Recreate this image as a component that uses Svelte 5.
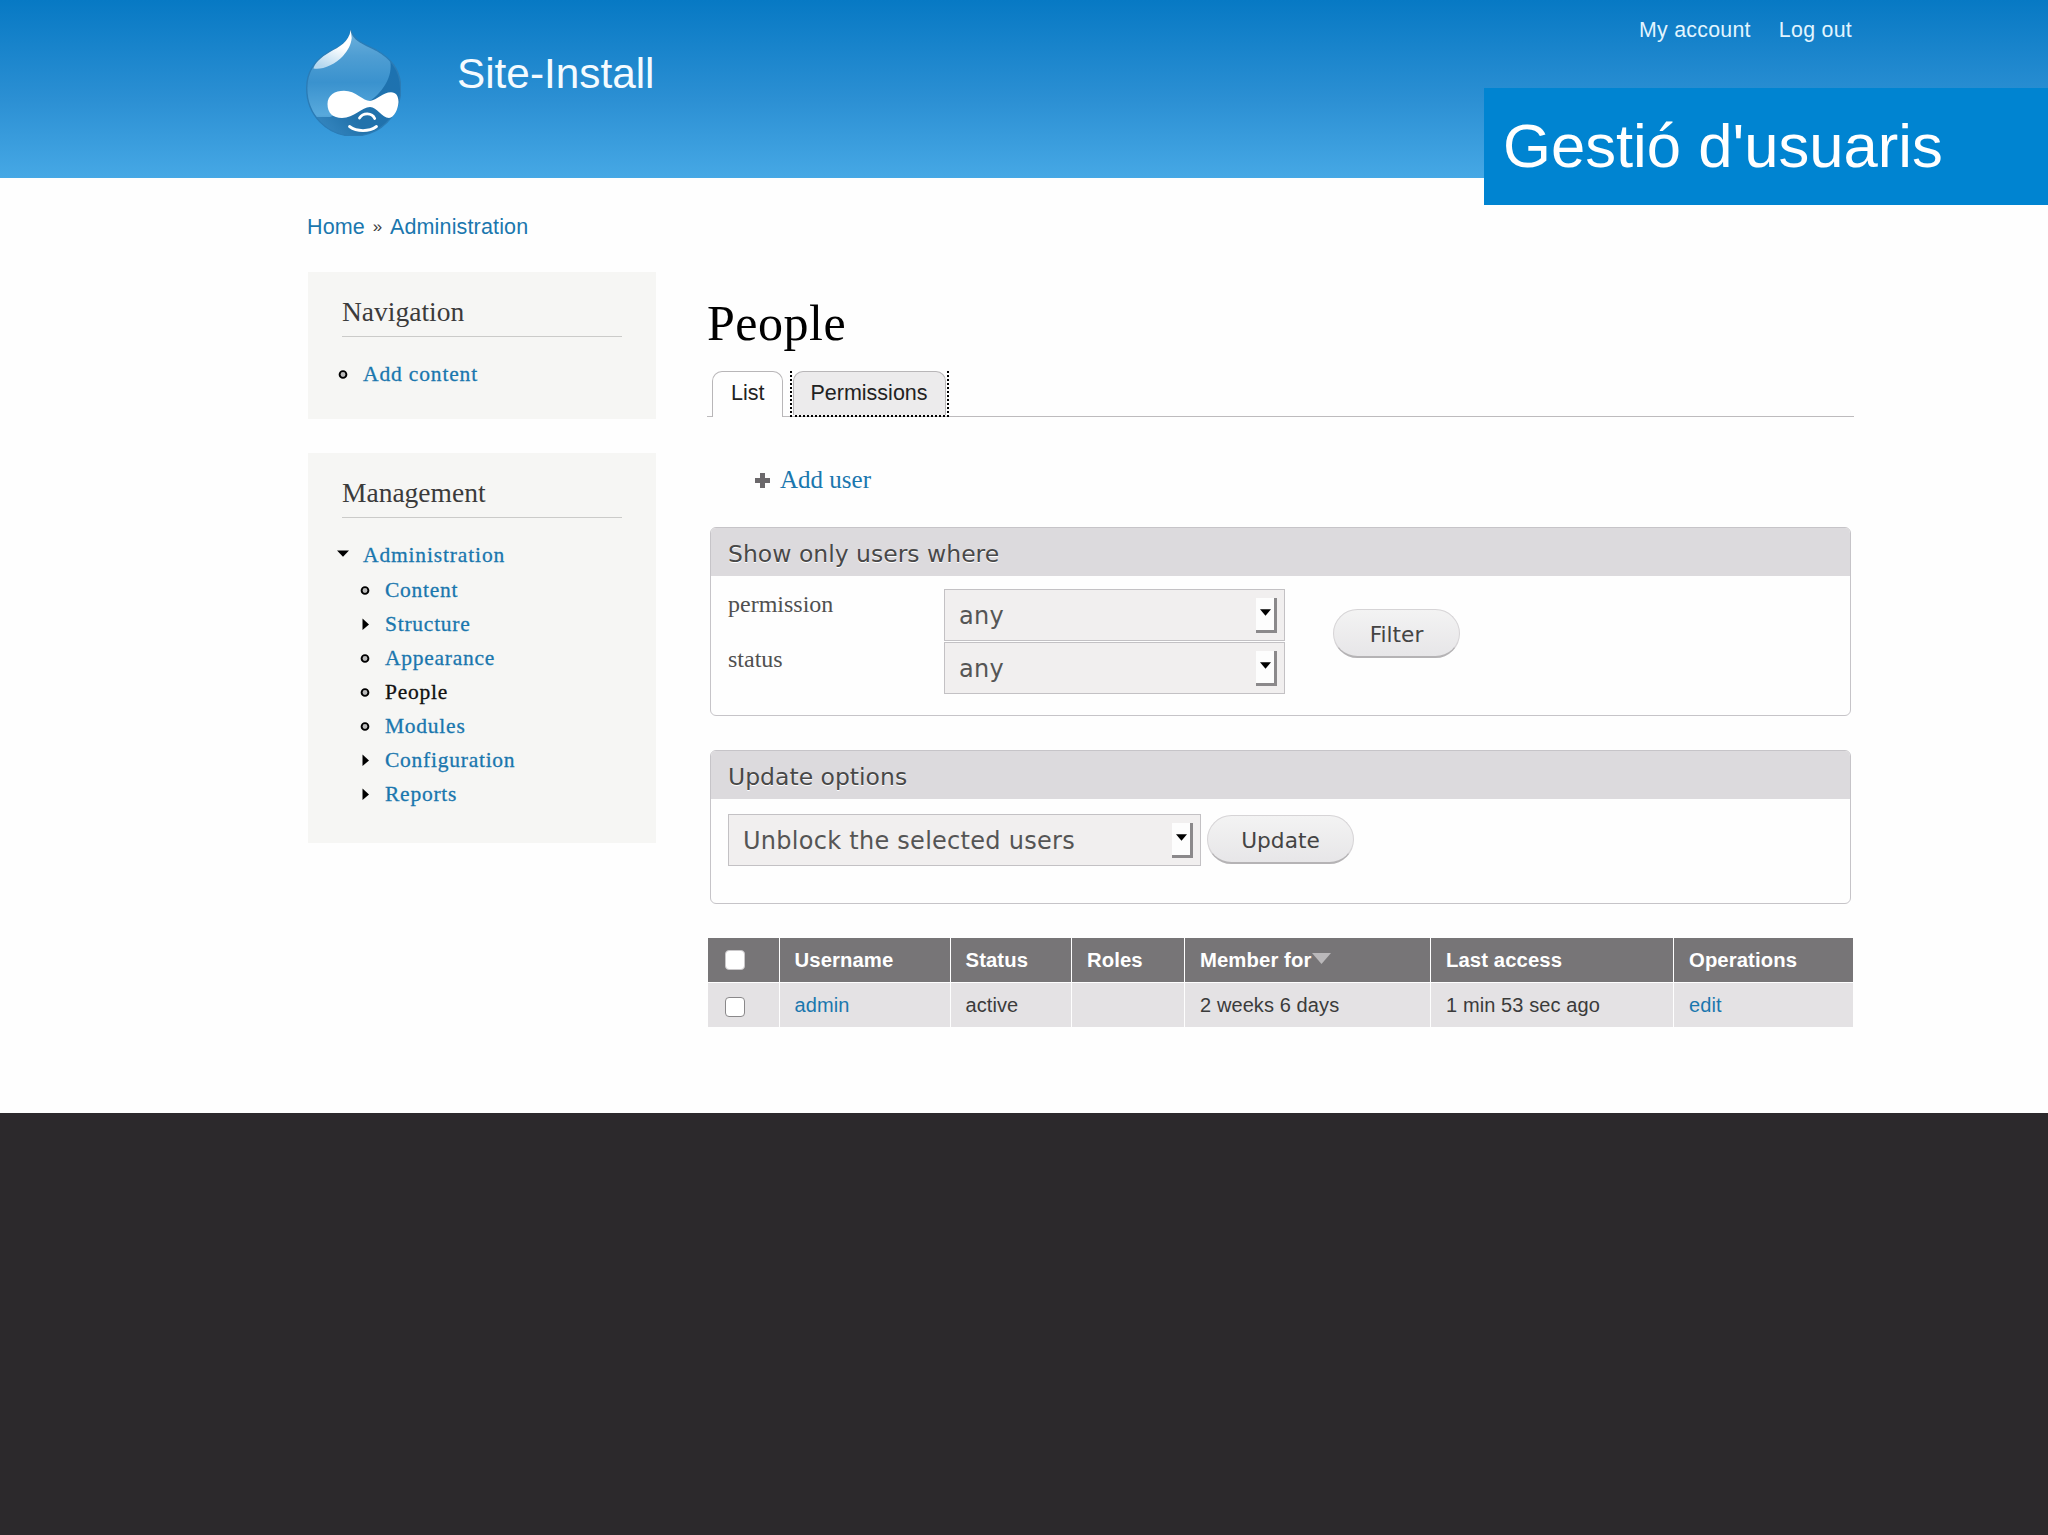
<script lang="ts">
	type Marker = 'leaf' | 'collapsed' | 'expanded';

	interface MenuItem {
		title: string;
		marker: Marker;
		active?: boolean;
		children?: MenuItem[];
	}

	interface Block {
		title: string;
		items: MenuItem[];
	}

	const blocks: Block[] = [
		{
			title: 'Navigation',
			items: [{ title: 'Add content', marker: 'leaf' }]
		},
		{
			title: 'Management',
			items: [
				{
					title: 'Administration',
					marker: 'expanded',
					children: [
						{ title: 'Content', marker: 'leaf' },
						{ title: 'Structure', marker: 'collapsed' },
						{ title: 'Appearance', marker: 'leaf' },
						{ title: 'People', marker: 'leaf', active: true },
						{ title: 'Modules', marker: 'leaf' },
						{ title: 'Configuration', marker: 'collapsed' },
						{ title: 'Reports', marker: 'collapsed' }
					]
				}
			]
		}
	];

	const columns = ['Username', 'Status', 'Roles', 'Member for', 'Last access', 'Operations'];

	const users = [
		{
			name: 'admin',
			status: 'active',
			roles: '',
			memberFor: '2 weeks 6 days',
			lastAccess: '1 min 53 sec ago'
		}
	];

	let sortedBy = $state('Member for');
	let tab = $state('List');
</script>

{#snippet menu(items: MenuItem[])}
	<ul class="menu">
		{#each items as item}
			<li>
				<div class="menu-row">
					<svg class="marker" viewBox="0 0 12 12" width="12" height="12">
						{#if item.marker === 'leaf'}
							<circle cx="6" cy="6.5" r="3.4" fill="#bbb" stroke="#000" stroke-width="1.9" />
						{:else if item.marker === 'collapsed'}
							<path d="M3.5 0.5 L10 6.5 L3.5 12Z" />
						{:else}
							<path d="M0 1.5 H12 L6 7.8Z" />
						{/if}
					</svg>
					<a href="#top" class:active={item.active}>{item.title}</a>
				</div>
				{#if item.children}
					{@render menu(item.children)}
				{/if}
			</li>
		{/each}
	</ul>
{/snippet}

{#snippet dropdown(value: string)}
	<div class="select" role="listbox">
		<span>{value}</span>
		<i class="arrow">
			<svg viewBox="0 0 10 6" width="11" height="7"><path d="M0 0 H10 L5 6Z" /></svg>
		</i>
	</div>
{/snippet}

<div class="page">
	<header>
		<svg class="logo" viewBox="0 0 95 107" width="95" height="107">
			<defs>
				<linearGradient id="drop" x1="0" y1="0" x2="0" y2="1">
					<stop offset="0" stop-color="#6fb2dd" />
					<stop offset="0.25" stop-color="#4f9ed3" />
					<stop offset="0.5" stop-color="#3a92ce" />
					<stop offset="0.8" stop-color="#58a9dc" />
					<stop offset="1" stop-color="#2a7ab5" />
				</linearGradient>
				<linearGradient id="shade" x1="1" y1="0.3" x2="0.1" y2="1">
					<stop offset="0" stop-color="#1d72b0" />
					<stop offset="0.6" stop-color="#2272ab" />
					<stop offset="1" stop-color="#3a8cc6" />
				</linearGradient>
				<linearGradient id="shine" x1="0.8" y1="0" x2="0.4" y2="1">
					<stop offset="0.4" stop-color="#fff" />
					<stop offset="1" stop-color="#b5d8ef" />
				</linearGradient>
				<clipPath id="outline">
					<path
						d="M44.7 1 C44 13 33 18 23 23 C9 31 .7 43 .7 59 C.7 86 21 107 47.5 107 C74 107 94.7 86 94.7 60 C94.7 40 84 29 70 21 C58 15 48 12 44.7 1Z"
					/>
				</clipPath>
			</defs>
			<g clip-path="url(#outline)">
				<rect width="95" height="107" fill="url(#drop)" />
				<path d="M83 27 C89 45 78 62 64 72 L24 88 H0 V107 H95 V30Z" fill="url(#shade)" />
			</g>
			<path
				d="M44.7 1 C44 13 33 18 23 23 C9 31 .7 43 .7 59 C.7 86 21 107 47.5 107 C74 107 94.7 86 94.7 60 C94.7 40 84 29 70 21 C58 15 48 12 44.7 1Z"
				fill="none"
				stroke="#2b7cb6"
				stroke-width="1.4"
			/>
			<path
				d="M44.7 1 C43 13 33 18 24 23 C14 29 9 34 7.5 39.5 C16 41 29 36 37 27 C42 21 45 16 45.7 9Z"
				fill="url(#shine)"
			/>
			<path
				d="M21.5 75 C21.5 66 29 61.7 38 61.7 C50 61.7 57 72 64 72 C71 71 77 63.3 85 63.3 C90 63.3 92.5 67 92.5 73 C92 81 88 88.5 83 89 C76 89 71 78 64 78 C56 78 48 89 36 89 C27 89 21.5 84 21.5 75Z"
				fill="#fff"
			/>
			<path
				d="M53.5 89 C57 83.5 66 83.5 68.7 89.5 M43.5 97.5 C51 103 63 103 70.5 97.5"
				fill="none"
				stroke="#fff"
				stroke-width="2.8"
				stroke-linecap="round"
			/>
		</svg>
		<h2 class="site-name">Site-Install</h2>
		<nav class="account">
			<a href="#top">My account</a>
			<a href="#top">Log out</a>
		</nav>
		<div class="caption">Gestió d'usuaris</div>
	</header>

	<div class="breadcrumb">
		<a href="#top">Home</a><span>»</span><a href="#top">Administration</a>
	</div>

	<div class="columns">
		<aside>
			{#each blocks as block}
				<section class="block">
					<h3>{block.title}</h3>
					{@render menu(block.items)}
				</section>
			{/each}
		</aside>

		<main>
			<h1>People</h1>

			<div class="tabs">
				{#each ['List', 'Permissions'] as name}
					<div class="tab-wrap" class:focused={name === 'Permissions'}>
						<button class="tab" class:selected={tab === name} onclick={() => (tab = name)}>{name}</button>
					</div>
				{/each}
			</div>

			<div class="action">
				<svg viewBox="0 0 15 15" width="15" height="15">
					<path d="M5 0h5v5h5v5h-5v5H5v-5H0V5h5Z" fill="#6b686b" />
				</svg>
				<a href="#top">Add user</a>
			</div>

			<div class="fieldset filters">
				<div class="legend">Show only users where</div>
				<div class="fields">
					<div class="labels">
						<span>permission</span>
						<span>status</span>
					</div>
					<div class="selects">
						{@render dropdown('any')}
						{@render dropdown('any')}
					</div>
					<button class="pill filter">Filter</button>
				</div>
			</div>

			<div class="fieldset update">
				<div class="legend">Update options</div>
				<div class="fields">
					{@render dropdown('Unblock the selected users')}
					<button class="pill">Update</button>
				</div>
			</div>

			<table>
				<colgroup>
					<col class="c-check" />
					<col class="c-name" />
					<col class="c-status" />
					<col class="c-roles" />
					<col class="c-member" />
					<col class="c-access" />
					<col />
				</colgroup>
				<thead>
					<tr>
						<th class="check"><input type="checkbox" aria-label="Select all" /></th>
						{#each columns as column}
							<th>
								{column}{#if column === sortedBy}<svg class="sort" viewBox="0 0 19 11" width="19" height="11"><path d="M0 0H19L9.5 11Z" fill="#bab8ba" /></svg>{/if}
							</th>
						{/each}
					</tr>
				</thead>
				<tbody>
					{#each users as user}
						<tr>
							<td class="check"><input type="checkbox" aria-label={user.name} /></td>
							<td><a href="#top">{user.name}</a></td>
							<td>{user.status}</td>
							<td>{user.roles}</td>
							<td>{user.memberFor}</td>
							<td>{user.lastAccess}</td>
							<td><a href="#top">edit</a></td>
						</tr>
					{/each}
				</tbody>
			</table>
		</main>
	</div>
</div>

<style>
	:global(body) {
		background: #2c292c;
	}

	.page {
		box-sizing: border-box;
		height: 1113px;
		overflow: hidden;
		background: #fefefe;
		color: #3b3b3b;
		font-family: 'Liberation Sans', Arial, sans-serif;
	}

	a {
		color: #1a77ae;
		text-decoration: none;
	}

	h1,
	h2,
	h3 {
		margin: 0;
		font-weight: normal;
	}

	header {
		position: relative;
		display: flex;
		align-items: flex-start;
		box-sizing: border-box;
		height: 178px;
		padding: 0 196px 0 306px;
		background: linear-gradient(#0779c4, #2b8fd3 55%, #46a8e5);
	}

	.logo {
		margin-top: 29px;
	}

	.site-name {
		margin: 49px 0 0 56px;
		color: #f4fbff;
		font-size: 42.3px;
		line-height: 50px;
	}

	.account {
		display: flex;
		gap: 28px;
		margin: 18px 0 0 auto;
		font-size: 21.3px;
		line-height: 24px;
		letter-spacing: 0.3px;
	}

	.account a {
		color: #e2f5ff;
	}

	.caption {
		position: absolute;
		top: 88px;
		right: 0;
		box-sizing: border-box;
		width: 564px;
		height: 117px;
		padding-left: 19px;
		background: #0084d1;
		color: #fff;
		font-size: 61.6px;
		line-height: 116px;
	}

	.breadcrumb {
		display: flex;
		padding: 37px 0 0 307px;
		font-size: 21.5px;
		line-height: 24px;
		letter-spacing: 0.15px;
	}

	.breadcrumb span {
		width: 25px;
		font-size: 17px;
		text-align: center;
	}

	.columns {
		display: flex;
		gap: 51px;
		padding: 33px 194px 0 308px;
	}

	aside {
		flex: none;
		width: 348px;
		font-family: 'Liberation Serif', Georgia, serif;
	}

	.block {
		box-sizing: border-box;
		margin-bottom: 34px;
		padding: 25px 34px 28px;
		background: #f6f6f4;
	}

	.block h3 {
		padding-bottom: 9px;
		border-bottom: 1px solid #cbcbc9;
		font-size: 27.5px;
		line-height: 30px;
	}

	.menu {
		margin: 20px 0 0 -5px;
		padding: 0;
		list-style: none;
	}

	.menu .menu {
		margin: 1px 0 4px 22px;
	}

	.menu-row {
		display: flex;
		align-items: center;
		gap: 14px;
		height: 34px;
		font-size: 21.5px;
		line-height: 34px;
		letter-spacing: 0.85px;
		-webkit-text-stroke: 0.3px;
	}

	.menu .menu .menu-row {
		letter-spacing: 0.75px;
	}

	.menu a.active {
		color: #111;
	}

	main {
		flex: 1;
	}

	h1 {
		margin-top: 21px;
		color: #000;
		font-family: 'Liberation Serif', Georgia, serif;
		font-size: 50px;
		line-height: 60px;
		letter-spacing: 0.5px;
	}

	.tabs {
		display: flex;
		gap: 7px;
		height: 45px;
		margin-top: 18px;
		padding-left: 5px;
		border-bottom: 1px solid #bdbbbd;
	}

	.tab-wrap {
		height: 46px;
	}

	.tab-wrap.focused {
		box-sizing: border-box;
		padding: 0 1px;
		border: 2px dotted #000;
		border-top: 0;
	}

	.tab {
		box-sizing: border-box;
		height: 100%;
		padding: 0 18px 4px;
		border: 1px solid #b8b6b8;
		border-bottom: 0;
		border-radius: 10px 10px 0 0;
		background: #ecebec;
		color: #222;
		font: 21.5px/38px 'Liberation Sans', Arial, sans-serif;
	}

	.focused .tab {
		padding: 0 17px 2px 16px;
	}

	.tab.selected {
		background: #fefefe;
	}

	.action {
		display: flex;
		align-items: center;
		gap: 10px;
		margin: 46px 0 0 48px;
		font-family: 'Liberation Serif', Georgia, serif;
		font-size: 25px;
		line-height: 34px;
	}

	.fieldset {
		box-sizing: border-box;
		margin: 0 3px 0 3px;
		overflow: hidden;
		border: 1.5px solid #c6c4c8;
		border-radius: 6px;
	}

	.filters {
		height: 189px;
		margin-top: 30px;
	}

	.update {
		height: 154px;
		margin-top: 34px;
	}

	.legend {
		height: 48px;
		padding-left: 17px;
		background: #dcdadd;
		color: #484848;
		font-family: 'DejaVu Sans', Verdana, sans-serif;
		font-size: 23.5px;
		line-height: 52px;
		text-shadow: 0 1px 0 #fff;
	}

	.fields {
		display: flex;
		padding-left: 17px;
	}

	.labels {
		display: flex;
		flex-direction: column;
		width: 216px;
		padding-top: 12px;
		color: #505050;
		font: 24px/32px 'Liberation Serif', Georgia, serif;
		gap: 23px;
	}

	.selects {
		display: flex;
		flex-direction: column;
		gap: 1px;
		width: 341px;
		padding-top: 13px;
	}

	.select {
		display: flex;
		align-items: center;
		justify-content: space-between;
		box-sizing: border-box;
		height: 52px;
		padding: 1px 7px 0 14px;
		border: 1.5px solid #c3c1c4;
		background: #f1efef;
		color: #555;
		font: 24px/52px 'DejaVu Sans', Verdana, sans-serif;
		letter-spacing: 0.27px;
	}

	.arrow {
		display: flex;
		align-items: center;
		justify-content: center;
		box-sizing: border-box;
		width: 21px;
		height: 35px;
		padding-bottom: 3px;
		border-right: 3px solid #8b898b;
		border-bottom: 3px solid #8b898b;
		background: #fdfdfd;
	}

	.pill {
		box-sizing: border-box;
		width: 147px;
		height: 49px;
		padding: 4px 0 0;
		border: 1px solid #d6d4d6;
		border-bottom: 2px solid #b5b3b5;
		border-radius: 25px;
		background: linear-gradient(#f3f3f3, #e7e6e8);
		color: #444;
		font: 21.7px/42px 'DejaVu Sans', Verdana, sans-serif;
	}

	.pill.filter {
		width: 127px;
		height: 49px;
		margin: 33px 0 0 48px;
	}

	.update .fields {
		gap: 6px;
		padding-top: 15px;
	}

	.update .select {
		width: 473px;
	}

	.update .pill {
		margin-top: 1px;
	}

	table {
		width: 1147px;
		margin: 33px 0 0 0;
		border-collapse: separate;
		border-spacing: 1.5px;
		table-layout: fixed;
		font-size: 20px;
		letter-spacing: 0.1px;
	}

	.c-check {
		width: 70.5px;
	}

	.c-name {
		width: 170px;
	}

	.c-status {
		width: 120.5px;
	}

	.c-roles {
		width: 112px;
	}

	.c-member {
		width: 245px;
	}

	.c-access {
		width: 242px;
	}

	th,
	td {
		box-sizing: border-box;
		height: 44px;
		padding: 0 0 0 15px;
		text-align: left;
		line-height: 40px;
		white-space: nowrap;
	}

	th {
		background: #777577;
		color: #fff;
		font-size: 20.3px;
	}

	td {
		background: #e4e2e4;
		line-height: 43px;
	}

	input {
		display: block;
		box-sizing: border-box;
		width: 20px;
		height: 20px;
		margin: 3px 0 0 2px;
		border: 1.5px solid #8a888a;
		border-radius: 4px;
		background: #fff;
		appearance: none;
	}

	th input {
		margin-top: 0;
		border-color: #c9c7c9;
	}

	.sort {
		margin-left: 1px;
		vertical-align: 3px;
	}
</style>
